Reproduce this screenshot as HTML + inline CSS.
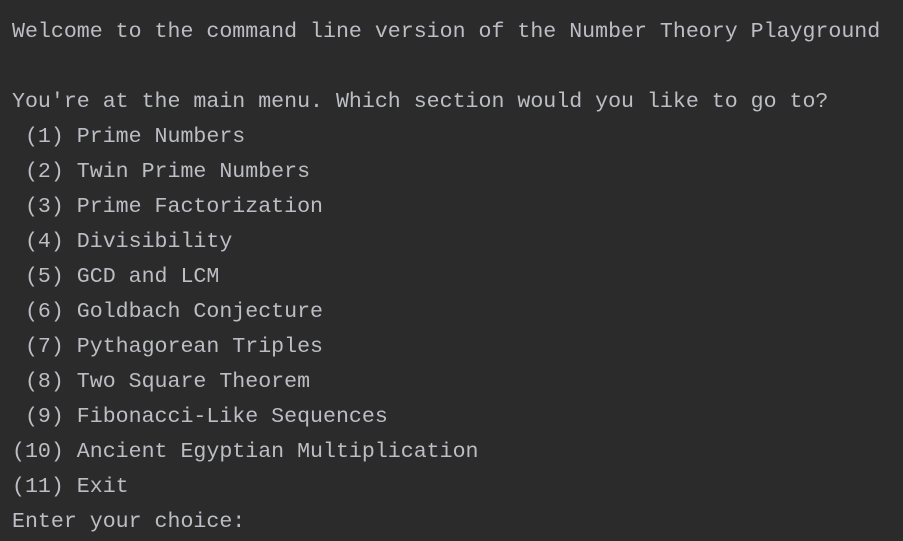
<!DOCTYPE html>
<html><head><meta charset="utf-8"><style>
html,body{margin:0;padding:0;background:#2b2b2b;width:903px;height:541px;overflow:hidden}
pre{margin:0;position:absolute;left:12px;top:15px;font-family:"Liberation Mono","DejaVu Sans Mono",monospace;font-size:21.6px;line-height:35px;color:#bcbec4}
</style></head><body><pre>Welcome to the command line version of the Number Theory Playground

You're at the main menu. Which section would you like to go to?
 (1) Prime Numbers
 (2) Twin Prime Numbers
 (3) Prime Factorization
 (4) Divisibility
 (5) GCD and LCM
 (6) Goldbach Conjecture
 (7) Pythagorean Triples
 (8) Two Square Theorem
 (9) Fibonacci-Like Sequences
(10) Ancient Egyptian Multiplication
(11) Exit
Enter your choice:</pre></body></html>
